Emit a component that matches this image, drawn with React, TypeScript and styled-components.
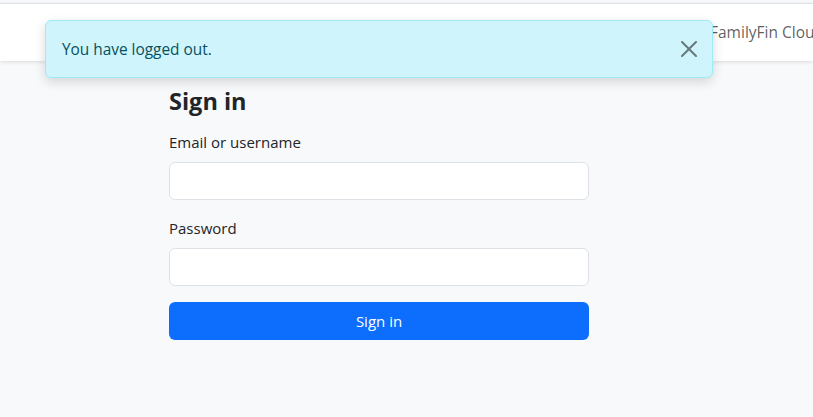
import React from "react";
import styled, { createGlobalStyle } from "styled-components";

const Global = createGlobalStyle`
  html, body { margin: 0; padding: 0; }
  body {
    background: #f8f9fa;
    font-family: "Segoe UI", "Open Sans", "Noto Sans", sans-serif;
    color: #212529;
    overflow: hidden;
  }
  * { box-sizing: border-box; }
`;

const Page = styled.div`
  position: relative;
  width: 813px;
  height: 417px;
  padding-top: 3px;
  background: #f8f9fa;
  overflow: hidden;
`;

const NavBar = styled.header`
  height: 58px;
  background: #fff;
  border-top: 1px solid #dee2e6;
  box-shadow: 0 1px 4px rgba(0, 0, 0, 0.12);
  display: flex;
  align-items: center;
  padding: 0 0 2px 710px;
  white-space: nowrap;
  overflow: hidden;
`;

const Brand = styled.span`
  font-size: 15.5px;
  color: rgba(0, 0, 0, 0.65);
`;

const Main = styled.main`
  width: 420px;
  margin: 0 auto 0 169px;
  padding-top: 26px;
  display: flex;
  flex-direction: column;
`;

const Title = styled.h1`
  margin: 0 0 14px;
  font-size: 23.5px;
  line-height: 29px;
  font-weight: 700;
  color: #212529;
`;

const Field = styled.div`
  display: flex;
  flex-direction: column;
  margin-bottom: 16px;
`;

const Label = styled.label`
  font-size: 15px;
  line-height: 24px;
  margin-bottom: 8px;
  color: #212529;
`;

const Input = styled.input`
  height: 38px;
  border: 1px solid #dee2e6;
  border-radius: 6px;
  background: #fff;
  font-size: 16px;
  padding: 6px 12px;
  outline: none;
`;

const Button = styled.button`
  height: 38px;
  border: none;
  border-radius: 6px;
  background: #0d6efd;
  color: #fff;
  font-family: inherit;
  font-size: 15px;
  cursor: pointer;
`;

const Toast = styled.div`
  position: absolute;
  top: 20px;
  left: 45px;
  width: 668px;
  height: 58px;
  background: #cff4fc;
  border: 1px solid #9eeaf9;
  border-radius: 6px;
  color: #055160;
  box-shadow: 0 4px 12px rgba(0, 0, 0, 0.15);
  display: flex;
  align-items: center;
  justify-content: space-between;
  padding: 0 7px 0 16px;
  font-size: 15.4px;
`;

const Close = styled.button`
  width: 32px;
  height: 32px;
  border: none;
  background: transparent;
  display: flex;
  align-items: center;
  justify-content: center;
  opacity: 0.5;
  padding: 0;
  cursor: pointer;
`;

export default function App() {
  return (
    <>
      <Global />
      <Page>
        <NavBar>
          <Brand>FamilyFin Cloud</Brand>
        </NavBar>
        <Main>
          <Title>Sign in</Title>
          <Field>
            <Label>Email or username</Label>
            <Input type="text" />
          </Field>
          <Field>
            <Label>Password</Label>
            <Input type="password" />
          </Field>
          <Button>Sign in</Button>
        </Main>
        <Toast>
          <span>You have logged out.</span>
          <Close aria-label="Close">
            <svg width="16" height="16" viewBox="0 0 16 16" fill="#000">
              <path d="M.293.293a1 1 0 0 1 1.414 0L8 6.586 14.293.293a1 1 0 1 1 1.414 1.414L9.414 8l6.293 6.293a1 1 0 0 1-1.414 1.414L8 9.414l-6.293 6.293a1 1 0 0 1-1.414-1.414L6.586 8 .293 1.707a1 1 0 0 1 0-1.414z" />
            </svg>
          </Close>
        </Toast>
      </Page>
    </>
  );
}
